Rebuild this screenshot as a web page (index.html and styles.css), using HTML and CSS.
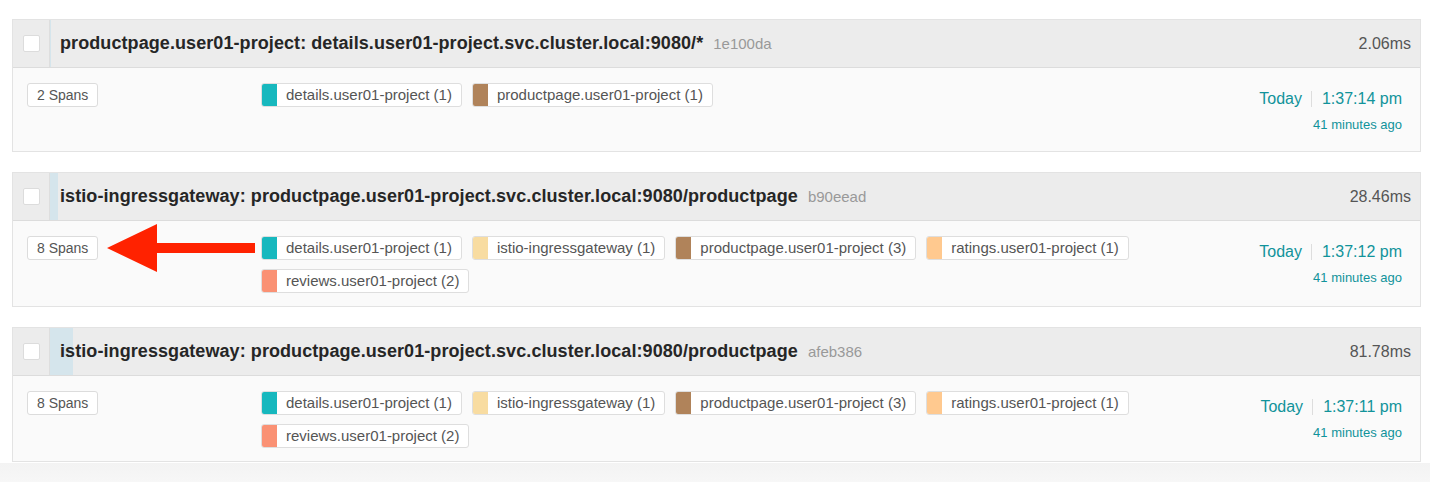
FILE: index.html
```html
<!DOCTYPE html>
<html lang="en">
<head>
<meta charset="utf-8">
<title>Trace results</title>
<link rel="stylesheet" href="styles.css">
</head>
<body>
<div class="results">

  <div class="card">
    <div class="card-head">
      <div class="check-cell"><span class="checkbox"></span></div>
      <div class="title-cell">
        <span class="dur-bar" style="width:1px"></span>
        <h3 class="title">productpage.user01-project: details.user01-project.svc.cluster.local:9080/*<span class="trace-id">1e100da</span></h3>
        <span class="duration">2.06ms</span>
      </div>
    </div>
    <div class="card-body">
      <div class="spans-col"><span class="spans">2 Spans</span></div>
      <ul class="tags">
        <li class="tag"><span class="swatch sw-details"></span><span class="tag-label">details.user01-project (1)</span></li>
        <li class="tag"><span class="swatch sw-productpage"></span><span class="tag-label">productpage.user01-project (1)</span></li>
      </ul>
      <div class="time">
        <div class="time-main"><span class="day">Today</span><span class="sep"></span><span class="clock">1:37:14 pm</span></div>
        <div class="ago">41 minutes ago</div>
      </div>
    </div>
  </div>

  <div class="card">
    <div class="card-head">
      <div class="check-cell"><span class="checkbox"></span></div>
      <div class="title-cell">
        <span class="dur-bar" style="width:8px"></span>
        <h3 class="title">istio-ingressgateway: productpage.user01-project.svc.cluster.local:9080/productpage<span class="trace-id">b90eead</span></h3>
        <span class="duration">28.46ms</span>
      </div>
    </div>
    <div class="card-body">
      <div class="spans-col"><span class="spans">8 Spans</span></div>
      <ul class="tags">
        <li class="tag"><span class="swatch sw-details"></span><span class="tag-label">details.user01-project (1)</span></li>
        <li class="tag"><span class="swatch sw-istio"></span><span class="tag-label">istio-ingressgateway (1)</span></li>
        <li class="tag"><span class="swatch sw-productpage"></span><span class="tag-label">productpage.user01-project (3)</span></li>
        <li class="tag"><span class="swatch sw-ratings"></span><span class="tag-label">ratings.user01-project (1)</span></li>
        <li class="tag"><span class="swatch sw-reviews"></span><span class="tag-label">reviews.user01-project (2)</span></li>
      </ul>
      <div class="time">
        <div class="time-main"><span class="day">Today</span><span class="sep"></span><span class="clock">1:37:12 pm</span></div>
        <div class="ago">41 minutes ago</div>
      </div>
      <svg class="arrow" width="150" height="50" viewBox="0 0 150 50" aria-hidden="true">
        <polygon points="0,24 50,0 50,19 148,19 148,29 50,29 50,48" fill="#ff2200"/>
      </svg>
    </div>
  </div>

  <div class="card">
    <div class="card-head">
      <div class="check-cell"><span class="checkbox"></span></div>
      <div class="title-cell">
        <span class="dur-bar" style="width:23px"></span>
        <h3 class="title">istio-ingressgateway: productpage.user01-project.svc.cluster.local:9080/productpage<span class="trace-id">afeb386</span></h3>
        <span class="duration">81.78ms</span>
      </div>
    </div>
    <div class="card-body">
      <div class="spans-col"><span class="spans">8 Spans</span></div>
      <ul class="tags">
        <li class="tag"><span class="swatch sw-details"></span><span class="tag-label">details.user01-project (1)</span></li>
        <li class="tag"><span class="swatch sw-istio"></span><span class="tag-label">istio-ingressgateway (1)</span></li>
        <li class="tag"><span class="swatch sw-productpage"></span><span class="tag-label">productpage.user01-project (3)</span></li>
        <li class="tag"><span class="swatch sw-ratings"></span><span class="tag-label">ratings.user01-project (1)</span></li>
        <li class="tag"><span class="swatch sw-reviews"></span><span class="tag-label">reviews.user01-project (2)</span></li>
      </ul>
      <div class="time">
        <div class="time-main"><span class="day">Today</span><span class="sep"></span><span class="clock">1:37:11 pm</span></div>
        <div class="ago">41 minutes ago</div>
      </div>
    </div>
  </div>

</div>
<div class="page-foot"></div>
</body>
</html>
```

FILE: styles.css
```css
* { box-sizing: border-box; }

html, body {
  margin: 0;
  padding: 0;
  background: #ffffff;
  font-family: "Liberation Sans", Arial, Helvetica, sans-serif;
  color: #333;
}

.results {
  display: flex;
  flex-direction: column;
  gap: 20px;
  padding: 19px 9px 0 12px;
}

.card {
  border: 1px solid #e3e3e3;
  background: #fafafa;
}

.card-head {
  display: flex;
  height: 48px;
  background: #ececec;
  border-bottom: 1px solid #dcdcdc;
}

.check-cell {
  width: 36px;
  display: flex;
  align-items: center;
  justify-content: center;
}

.checkbox {
  display: block;
  width: 17px;
  height: 17px;
  background: #fff;
  border: 1px solid #dcdcdc;
  border-radius: 2px;
}

.title-cell {
  position: relative;
  flex: 1;
  display: flex;
  align-items: center;
  padding: 0 9px 0 10px;
  border-left: 1px solid #dedede;
}

.dur-bar {
  position: absolute;
  left: 0;
  top: 0;
  bottom: 0;
  background: #d5e5ec;
}

.title {
  position: relative;
  flex: 1;
  margin: 0;
  font-size: 18px;
  font-weight: 700;
  letter-spacing: 0.08px;
  color: #262626;
  white-space: nowrap;
}

.trace-id {
  margin-left: 10px;
  font-size: 15px;
  font-weight: 400;
  letter-spacing: 0;
  color: #999;
}

.duration {
  position: relative;
  font-size: 16px;
  color: #555;
}

.card-body {
  position: relative;
  display: flex;
  align-items: flex-start;
  padding: 15px 18px 13px 14px;
}

.spans-col {
  width: 234px;
  flex: none;
}

.spans {
  display: inline-block;
  height: 24px;
  line-height: 22px;
  padding: 0 9px;
  font-size: 14px;
  color: #555;
  background: #fff;
  border: 1px solid #dcdcdc;
  border-radius: 3px;
}

.tags {
  flex: 1;
  display: flex;
  flex-wrap: wrap;
  gap: 9px 10px;
  margin: 0;
  padding: 0 120px 0 0;
  list-style: none;
}

.tag {
  display: flex;
  height: 24px;
  background: #fff;
  border: 1px solid #dedede;
  border-radius: 3px;
  overflow: hidden;
}

.swatch {
  width: 16px;
  margin: -1px 0 -1px -1px;
  border-radius: 3px 0 0 3px;
}

.sw-details { background: #17b8be; }
.sw-productpage { background: #b0835a; }
.sw-istio { background: #f8dca1; }
.sw-ratings { background: #ffc98f; }
.sw-reviews { background: #fa9174; }

.tag-label {
  padding: 0 9px;
  line-height: 22px;
  font-size: 15px;
  color: #555;
  white-space: nowrap;
}

.time {
  flex: none;
  display: flex;
  flex-direction: column;
  align-items: flex-end;
  padding-bottom: 3px;
  color: #11939a;
}

.time-main {
  display: flex;
  align-items: center;
  height: 32px;
  font-size: 16px;
}

.sep {
  width: 1px;
  height: 16px;
  margin: 0 10px 0 9px;
  background: #dddddd;
}

.ago {
  font-size: 13px;
  line-height: 20px;
}

.arrow {
  position: absolute;
  left: 94px;
  top: 3px;
}

.page-foot {
  height: 20px;
  margin-top: 1px;
  background: linear-gradient(to bottom, #f3f3f3, #f7f7f7);
}
```
